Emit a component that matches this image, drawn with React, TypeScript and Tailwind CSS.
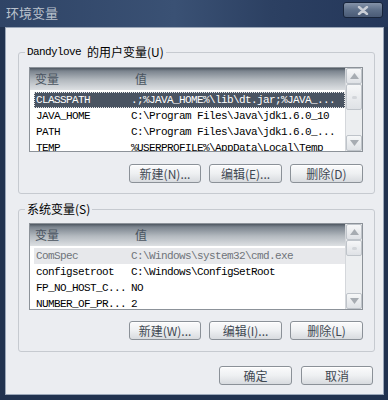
import React from 'react';

type Row = { name: string; value: string; state?: 'selected' | 'inactive' };

const USER_VARS: Row[] = [
  { name: 'CLASSPATH', value: '.;%JAVA_HOME%\\lib\\dt.jar;%JAVA_...', state: 'selected' },
  { name: 'JAVA_HOME', value: 'C:\\Program Files\\Java\\jdk1.6.0_10' },
  { name: 'PATH', value: 'C:\\Program Files\\Java\\jdk1.6.0_...' },
  { name: 'TEMP', value: '%USERPROFILE%\\AppData\\Local\\Temp' },
];

const SYS_VARS: Row[] = [
  { name: 'ComSpec', value: 'C:\\Windows\\system32\\cmd.exe', state: 'inactive' },
  { name: 'configsetroot', value: 'C:\\Windows\\ConfigSetRoot' },
  { name: 'FP_NO_HOST_C...', value: 'NO' },
  { name: 'NUMBER_OF_PR...', value: '2' },
];

const mono = "font-['Liberation_Mono',monospace] text-[11px] tracking-[-0.6px]";
const cjk = "font-['Noto_Sans_CJK_SC',sans-serif]";

const Arrow = ({ up }: { up?: boolean }) => (
  <svg width="9" height="6" viewBox="0 0 9 6">
    <path d={up ? 'M4.5 0 L9 6 L0 6 Z' : 'M0 0 L9 0 L4.5 6 Z'} fill="#a7acb2" />
  </svg>
);

const ScrollBtn = ({ children, className = '' }: { children?: React.ReactNode; className?: string }) => (
  <div className={`h-[16px] flex items-center justify-center rounded-[2px] border border-[#bfc4ca] bg-gradient-to-b from-[#f6f7f8] to-[#dfe2e6] ${className}`}>
    {children}
  </div>
);

const VarList = ({ rows, height, thumb }: { rows: Row[]; height: string; thumb: string }) => (
  <div className={`${height} w-[334px] flex border border-[#8c9299] bg-white`}>
    <div className="flex-1 flex flex-col overflow-hidden">
      <div className={`h-[22px] shrink-0 flex items-center bg-[linear-gradient(to_bottom,#4e5761_0px,#7b848e_3px,#b3b9bf_12px,#dde0e3_100%)] text-[12px] text-[#4a5460] ${cjk}`}>
        <span className="w-[105px] pl-[5px]">变量</span>
        <span>值</span>
      </div>
      <div className="pt-[2px] pl-[4px] flex flex-col">
        {rows.map((r) => (
          <div
            key={r.name}
            className={`h-[16px] shrink-0 flex items-center ${mono} ${
              r.state === 'selected'
                ? 'bg-[#4a5462] text-white outline-1 outline-dotted outline-offset-[-1px] outline-[#e8e8e8]'
                : r.state === 'inactive'
                ? 'bg-[#e7e8eb] text-[#6f747a]'
                : 'text-black'
            }`}
          >
            <span className="w-[97px] pl-[2px] shrink-0 whitespace-nowrap">{r.name}</span>
            <span className="whitespace-nowrap">{r.value}</span>
          </div>
        ))}
      </div>
    </div>
    <div className="w-[17px] flex flex-col bg-[#eceef0] border-l border-[#d4d7db]">
      <ScrollBtn><Arrow up /></ScrollBtn>
      <ScrollBtn className={thumb}>
        <div className="w-[5px] h-[3px] rounded-full bg-[#d3d6da]" />
      </ScrollBtn>
      <div className="flex-1" />
      <ScrollBtn><Arrow /></ScrollBtn>
    </div>
  </div>
);

const Btn = ({ label, w = 'w-[73px]' }: { label: string; w?: string }) => (
  <button
    className={`${w} h-[19px] rounded-[3px] border border-[#8b9198] bg-gradient-to-b from-[#fbfbfc] via-[#eef0f2] to-[#d8dbdf] shadow-[inset_0_1px_0_#ffffff] text-[12px] leading-none text-[#3f4852] ${cjk} flex items-center justify-center`}
  >
    {label}
  </button>
);

const Group = ({
  legend,
  children,
  className,
}: {
  legend: React.ReactNode;
  children: React.ReactNode;
  className: string;
}) => (
  <div className={`relative ml-[12px] w-[357px] rounded-[3px] border border-[#c6cad0] ${className}`}>
    <div className="absolute -top-[9px] left-[6px] px-[2px] h-[16px] flex items-center bg-[#ebedf1] text-black text-[12px]">
      {legend}
    </div>
    {children}
  </div>
);

export default function App() {
  return (
    <div className="w-[388px] h-[400px] flex flex-col bg-[#21324f] overflow-hidden">
      <div className="h-[27px] shrink-0 flex items-start justify-between bg-[linear-gradient(to_right,#2f4466,#3a5174_45%,#2c4062_70%,#24375a)]">
        <span className={`pl-[6px] pt-[5px] text-[13px] leading-[16px] text-[#b9c1cc] ${cjk}`}>环境变量</span>
        <div className="mt-[2px] mr-[5px] w-[40px] h-[16px] rounded-[3px] border border-[#18253b] bg-gradient-to-b from-[#8593a8] via-[#5d6f89] to-[#4a5b76] flex items-center justify-center">
          <svg width="12" height="9" viewBox="0 0 12 9">
            <path d="M2 1 L10 8 M10 1 L2 8" stroke="#c9ced6" strokeWidth="2.4" strokeLinecap="round" />
          </svg>
        </div>
      </div>
      <div className="ml-[5px] w-[379px] h-[368px] shrink-0 bg-[#ebedf1] border border-[#9aa6b8] flex flex-col">
        <Group
          className="mt-[24px] h-[142px] pt-[14px] pl-[10px]"
          legend={
            <>
              <span className={mono}>Dandylove</span>
              <span className={`${cjk} ml-[6px]`}>的用户变量(U)</span>
            </>
          }
        >
          <VarList rows={USER_VARS} height="h-[85px]" thumb="h-[26px]" />
          <div className="mt-[12px] w-[334px] flex justify-end gap-[8px]">
            <Btn label="新建(N)..." w="w-[72px]" />
            <Btn label="编辑(E)..." />
            <Btn label="删除(D)" />
          </div>
        </Group>
        <Group
          className="mt-[15px] h-[143px] pt-[13px] pl-[10px]"
          legend={<span className={cjk}>系统变量(S)</span>}
        >
          <VarList rows={SYS_VARS} height="h-[87px]" thumb="h-[16px]" />
          <div className="mt-[11px] w-[334px] flex justify-end gap-[8px]">
            <Btn label="新建(W)..." w="w-[72px]" />
            <Btn label="编辑(I)..." />
            <Btn label="删除(L)" />
          </div>
        </Group>
        <div className="mt-[14px] mr-[10px] flex justify-end gap-[9px]">
          <Btn label="确定" />
          <Btn label="取消" w="w-[72px]" />
        </div>
      </div>
    </div>
  );
}
